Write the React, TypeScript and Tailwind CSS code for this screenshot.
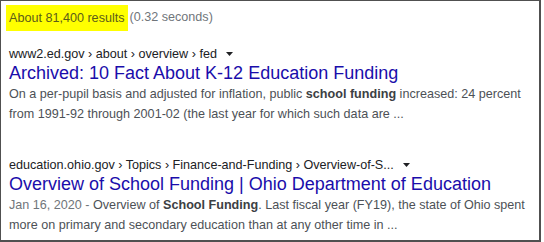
import React from 'react';

const font = { fontFamily: '"Liberation Sans", Arial, sans-serif' };

function Caret() {
  return (
    <svg width="7" height="4" viewBox="0 0 7 4" className="ml-[9px] inline-block">
      <path d="M0 0 L7 0 L3.5 4 Z" fill="#202124" />
    </svg>
  );
}

export default function App() {
  return (
    <div className="w-[544px] h-[242px] bg-white overflow-hidden" style={font}>
      <div className="w-[541px] h-[242px] border-l border-t border-r-2 border-b-2 border-[#505050] pl-[8px]">
        <div className="pt-[3px] h-[30px] flex items-center text-[12.6px]">
          <span className="bg-[#ffff00] text-[#5c5c1a] leading-[26px] pl-[3px] pr-[3px] -ml-[3px]">About 81,400 results</span>
          <span className="text-[#70757a] ml-[2px]">(0.32 seconds)</span>
        </div>

        <div className="mt-[14px]">
          <div className="flex items-center text-[12.6px] leading-[18px] text-[#202124]">
            www2.ed.gov › about › overview › fed
            <Caret />
          </div>
          <div className="text-[18px] leading-[20px] text-[#1a0dab]">
            Archived: 10 Fact About K-12 Education Funding
          </div>
          <div className="text-[12.6px] leading-[20px] text-[#4d5156] mt-[1px] whitespace-nowrap">
            On a per-pupil basis and adjusted for inflation, public <b className="text-[#3c4043]">school funding</b> increased: 24 percent
            <br />
            from 1991-92 through 2001-02 (the last year for which such data are ...
          </div>
        </div>

        <div className="mt-[32px]">
          <div className="flex items-center text-[12.6px] leading-[18px] text-[#202124]">
            education.ohio.gov › Topics › Finance-and-Funding › Overview-of-S...
            <Caret />
          </div>
          <div className="text-[18px] leading-[20px] text-[#1a0dab]">
            Overview of School Funding | Ohio Department of Education
          </div>
          <div className="text-[12.6px] leading-[20px] text-[#4d5156] mt-[1px] whitespace-nowrap">
            <span className="text-[#70757a]">Jan 16, 2020 - </span>Overview of <b className="text-[#3c4043]">School Funding</b>. Last fiscal year (FY19), the state of Ohio spent
            <br />
            more on primary and secondary education than at any other time in ...
          </div>
        </div>
      </div>
    </div>
  );
}
